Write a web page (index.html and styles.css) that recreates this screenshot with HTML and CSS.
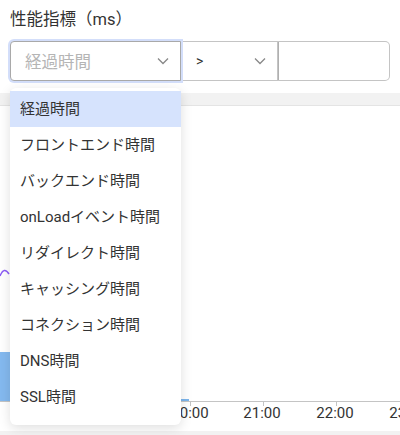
FILE: index.html
```html
<!DOCTYPE html>
<html lang="ja">
<head>
<meta charset="utf-8">
<link rel="stylesheet" href="styles.css">
</head>
<body>
<div class="page">
  <div class="title">性能指標（ms）</div>
  <div class="filter">
    <div class="sel sel-metric focused">
      <span class="placeholder">経過時間</span>
      <svg class="chev" width="12" height="8" viewBox="0 0 12 8"><path d="M1 1.5 L6 6.5 L11 1.5" fill="none" stroke="#888" stroke-width="1.3"/></svg>
    </div>
    <div class="sel sel-op">
      <span class="val">&gt;</span>
      <svg class="chev" width="12" height="8" viewBox="0 0 12 8"><path d="M1 1.5 L6 6.5 L11 1.5" fill="none" stroke="#888" stroke-width="1.3"/></svg>
    </div>
    <div class="inp"></div>
  </div>
  <div class="chart">
    <svg class="plot" width="400" height="342" viewBox="0 0 400 342">
      <rect x="0" y="0" width="400" height="12" fill="#f2f2f2"/>
      <line x1="0" y1="12.5" x2="400" y2="12.5" stroke="#e4e4e4"/>
      <path d="M0 183 Q4 173 9 181" fill="none" stroke="#8b5cf6" stroke-width="1.5"/>
      <rect x="0" y="259" width="10" height="49" fill="#84b9ef"/>
      <rect x="181" y="306" width="8" height="2" fill="#7cb5ec"/>
      <line x1="0" y1="308.5" x2="400" y2="308.5" stroke="#c4c4c4"/>
      <line x1="190.5" y1="309" x2="190.5" y2="313" stroke="#c4c4c4"/>
      <line x1="263.5" y1="309" x2="263.5" y2="313" stroke="#c4c4c4"/>
      <line x1="336.5" y1="309" x2="336.5" y2="313" stroke="#c4c4c4"/>
      <text x="190" y="325" class="lbl" text-anchor="middle">20:00</text>
      <text x="262" y="325" class="lbl" text-anchor="middle">21:00</text>
      <text x="335" y="325" class="lbl" text-anchor="middle">22:00</text>
      <text x="408" y="325" class="lbl" text-anchor="middle">23:00</text>
      <rect x="0" y="338" width="400" height="4" fill="#f2f2f2"/>
    </svg>
    <ul class="menu">
      <li class="item active">経過時間</li>
      <li class="item">フロントエンド時間</li>
      <li class="item">バックエンド時間</li>
      <li class="item">onLoadイベント時間</li>
      <li class="item">リダイレクト時間</li>
      <li class="item">キャッシング時間</li>
      <li class="item">コネクション時間</li>
      <li class="item">DNS時間</li>
      <li class="item">SSL時間</li>
    </ul>
  </div>
</div>
</body>
</html>
```
FILE: styles.css
```css
html, body {
  margin: 0;
  padding: 0;
  background: #fff;
}
body {
  font-family: Roboto, "Noto Sans CJK JP", sans-serif;
  color: #333;
  width: 400px;
  height: 435px;
  overflow: hidden;
}
.page {
  position: relative;
}
.title {
  font-size: 16.5px;
  line-height: 20px;
  padding: 10px 10px 0 10px;
  color: #333;
}
.filter {
  display: flex;
  margin: 11px 10px 0 10px;
  height: 40px;
}
.sel, .inp {
  box-sizing: border-box;
  height: 40px;
  border: 1px solid #c4c4c4;
  display: flex;
  align-items: center;
  background: #fff;
}
.sel-metric {
  width: 171px;
  border-radius: 4px 0 0 4px;
  padding: 0 11px 0 14px;
  justify-content: space-between;
  border-color: #a9a9a9;
}
.focused {
  box-shadow: 0 0 0 2px #d3defa;
  position: relative;
  z-index: 1;
}
.placeholder {
  font-size: 16.5px;
  color: #b5b5b5;
}
.sel-op {
  width: 97px;
  border-left: none;
  padding: 0 11px 0 15px;
  justify-content: space-between;
}
.val {
  font-size: 14px;
  color: #333;
}
.inp {
  flex: 1;
  border-left: 1px solid #b0b0b0;
  border-radius: 0 5px 5px 0;
}
.chart {
  position: relative;
  margin-top: 12px;
}
.plot {
  display: block;
}
.lbl {
  font-family: Roboto, sans-serif;
  font-size: 15px;
  fill: #333;
}
.menu {
  position: absolute;
  left: 10px;
  top: -5px;
  width: 171px;
  margin: 0;
  padding: 3px 0 10px 0;
  list-style: none;
  background: #fff;
  border-radius: 6px;
  box-shadow: 0 3px 12px rgba(0, 0, 0, 0.13);
  z-index: 2;
}
.item {
  height: 36px;
  line-height: 36px;
  padding: 0 10px;
  font-size: 15px;
  color: #333;
  white-space: nowrap;
}
.item.active {
  background: #d6e3fd;
}
```
